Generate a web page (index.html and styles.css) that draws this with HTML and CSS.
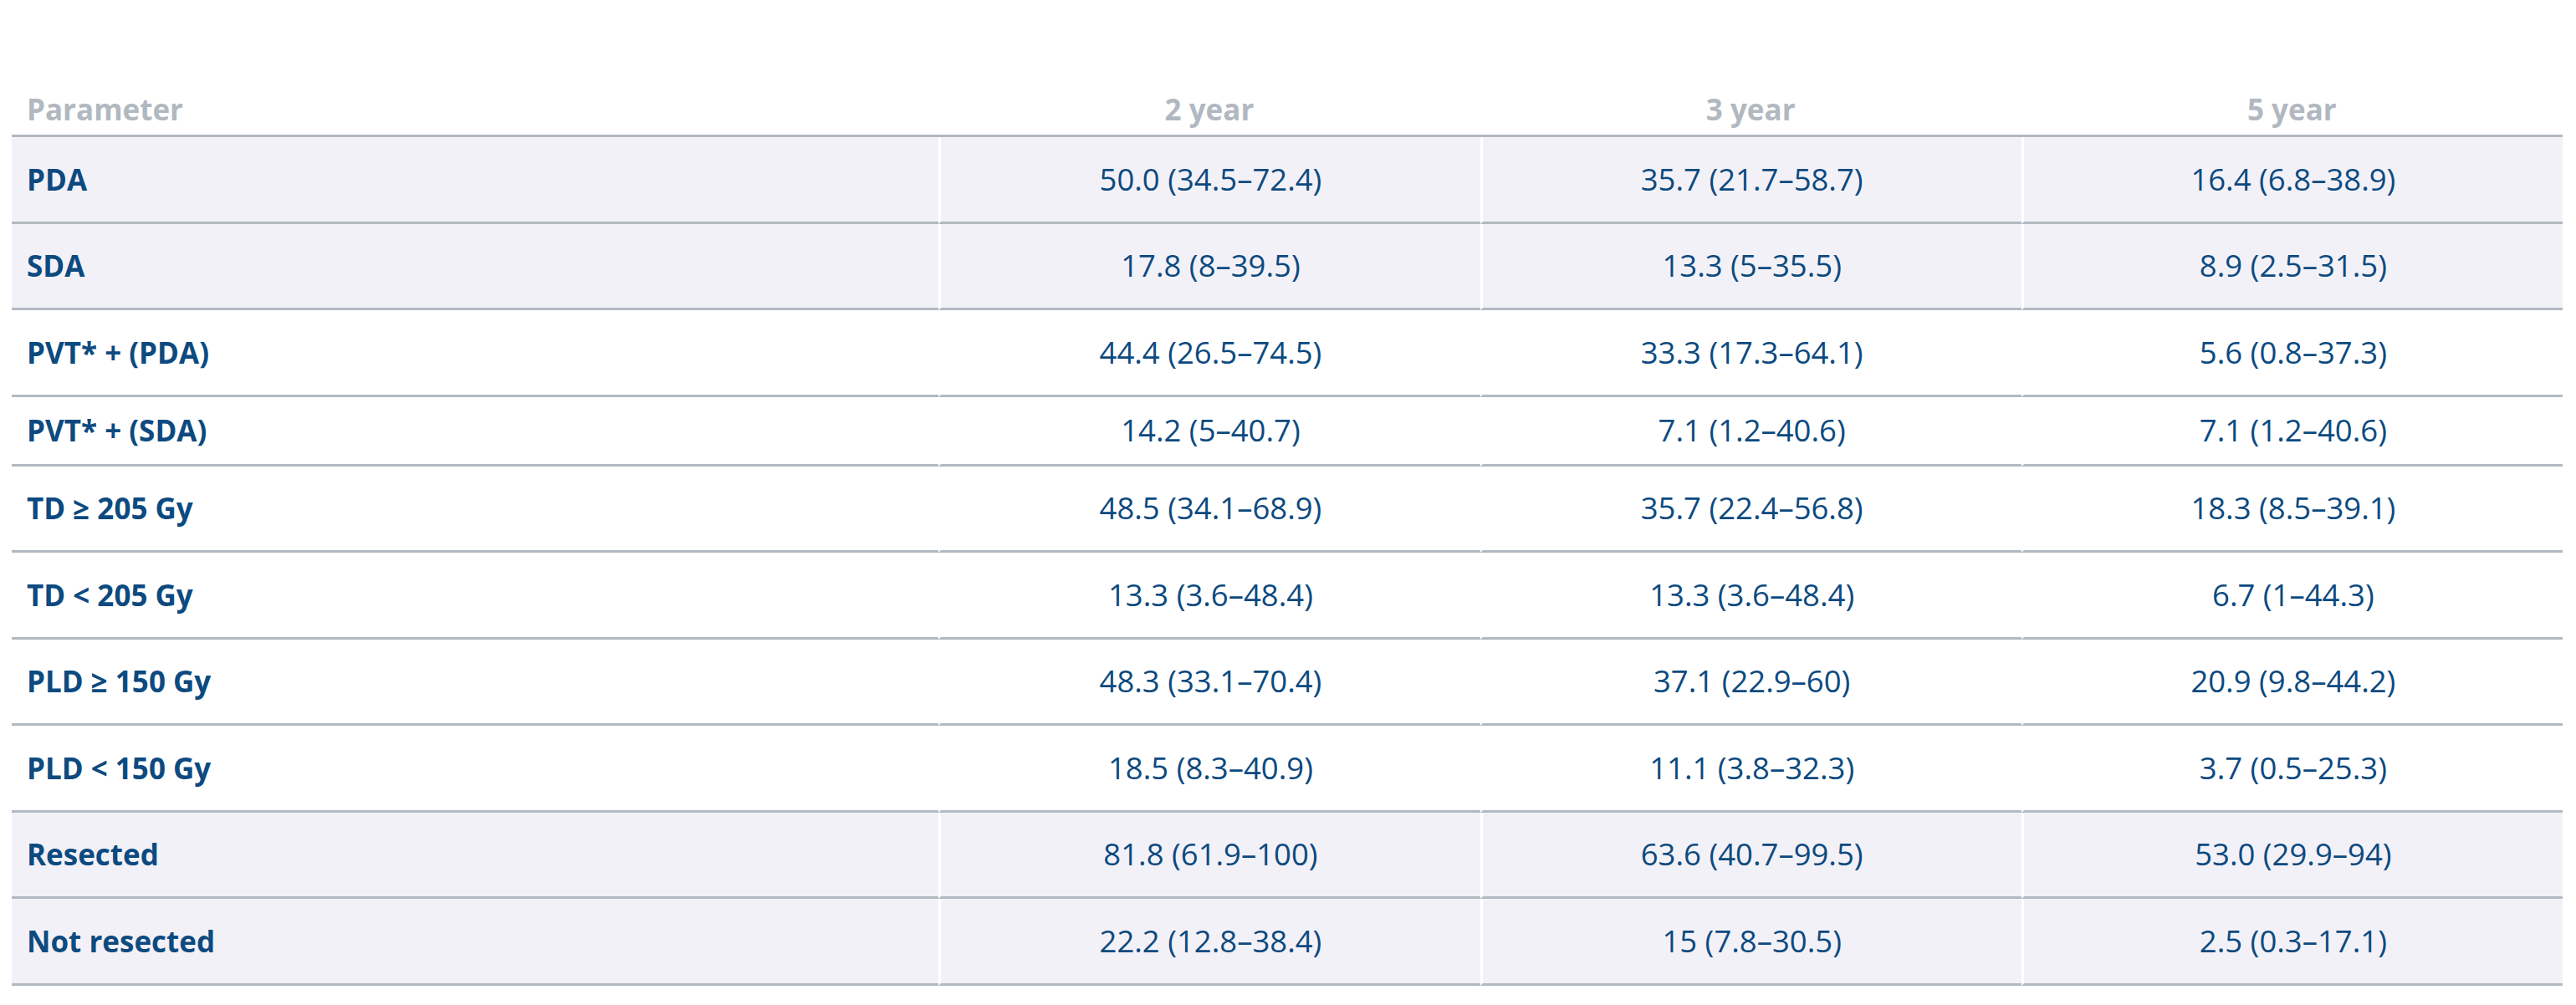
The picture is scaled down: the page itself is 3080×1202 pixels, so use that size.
FILE: index.html
```html
<!DOCTYPE html>
<html lang="en">
<head>
<meta charset="utf-8">
<title>Survival table</title>
<link rel="stylesheet" href="styles.css">
</head>
<body>
<table class="data">
  <colgroup>
    <col class="c-param">
    <col class="c-val">
    <col class="c-val">
    <col class="c-val">
  </colgroup>
  <thead>
    <tr>
      <th class="param">Parameter</th>
      <th>2 year</th>
      <th>3 year</th>
      <th>5 year</th>
    </tr>
  </thead>
  <tbody>
    <tr class="shade"><td class="param">PDA</td><td>50.0 (34.5–72.4)</td><td>35.7 (21.7–58.7)</td><td>16.4 (6.8–38.9)</td></tr>
    <tr class="shade"><td class="param">SDA</td><td>17.8 (8–39.5)</td><td>13.3 (5–35.5)</td><td>8.9 (2.5–31.5)</td></tr>
    <tr><td class="param">PVT* + (PDA)</td><td>44.4 (26.5–74.5)</td><td>33.3 (17.3–64.1)</td><td>5.6 (0.8–37.3)</td></tr>
    <tr class="short"><td class="param">PVT* + (SDA)</td><td>14.2 (5–40.7)</td><td>7.1 (1.2–40.6)</td><td>7.1 (1.2–40.6)</td></tr>
    <tr><td class="param">TD ≥ 205 Gy</td><td>48.5 (34.1–68.9)</td><td>35.7 (22.4–56.8)</td><td>18.3 (8.5–39.1)</td></tr>
    <tr><td class="param">TD &lt; 205 Gy</td><td>13.3 (3.6–48.4)</td><td>13.3 (3.6–48.4)</td><td>6.7 (1–44.3)</td></tr>
    <tr><td class="param">PLD ≥ 150 Gy</td><td>48.3 (33.1–70.4)</td><td>37.1 (22.9–60)</td><td>20.9 (9.8–44.2)</td></tr>
    <tr><td class="param">PLD &lt; 150 Gy</td><td>18.5 (8.3–40.9)</td><td>11.1 (3.8–32.3)</td><td>3.7 (0.5–25.3)</td></tr>
    <tr class="shade"><td class="param">Resected</td><td>81.8 (61.9–100)</td><td>63.6 (40.7–99.5)</td><td>53.0 (29.9–94)</td></tr>
    <tr class="shade"><td class="param">Not resected</td><td>22.2 (12.8–38.4)</td><td>15 (7.8–30.5)</td><td>2.5 (0.3–17.1)</td></tr>
  </tbody>
</table>
</body>
</html>
```

FILE: styles.css
```css
html, body {
  margin: 0;
  padding: 0;
  background: #ffffff;
}

body {
  padding: 100px 16px 0 14px;
  font-family: "Open Sans", "Noto Sans", "Liberation Sans", sans-serif;
  color: #0c4a7f;
}

.data {
  width: 3050px;
  border-collapse: separate;
  border-spacing: 0;
  table-layout: fixed;
}

.c-param { width: 1108px; }
.c-val { width: 647px; }

.data th {
  font-size: 35px;
  font-weight: 700;
  color: #b1b8c0;
  line-height: 41px;
  padding: 10px 18px 10px;
  text-align: center;
  border-bottom: 3px solid #b3b9c1;
}

.data th.param,
.data td.param {
  text-align: left;
}

.data td {
  height: 100.5px;
  padding: 0 18px;
  font-size: 36.5px;
  text-align: center;
  vertical-align: middle;
  line-height: 41px;
  border-bottom: 3px solid #b3b9c1;
}

.data td + td {
  border-left: 3px solid #ffffff;
}

.data td.param {
  font-size: 35px;
  font-weight: 700;
}

.data tr.shade td {
  background: #f3f1f8;
}

.data tr.short td {
  height: 80px;
}
```
